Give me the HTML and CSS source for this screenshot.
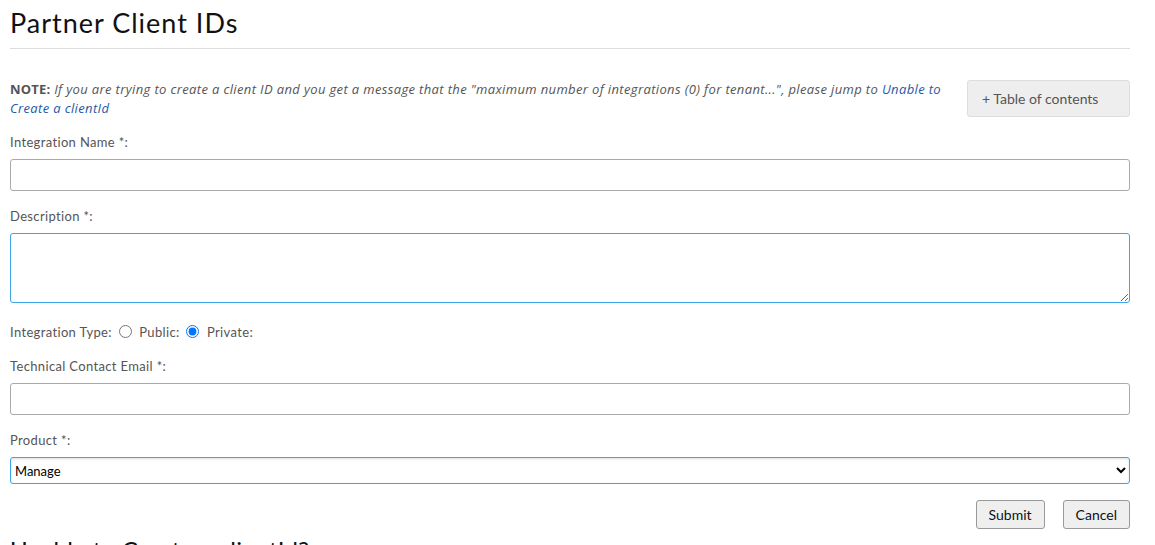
FILE: index.html
```html
<!DOCTYPE html>
<html>
<head>
<meta charset="utf-8">
<link rel="stylesheet" href="styles.css">
</head>
<body>
<div class="page">
  <h1 class="title">Partner Client IDs</h1>
  <div class="note-row">
    <p class="note"><b>NOTE:</b> <i>If you are trying to create a client ID and you get a message that the "maximum number of integrations (0) for tenant...", please jump to <a href="#" class="link">Unable to Create a clientId</a></i></p>
    <button class="toc">+ Table of contents</button>
  </div>
  <form class="form">
    <label class="label">Integration Name *:</label>
    <input class="input" type="text">
    <label class="label">Description *:</label>
    <textarea class="textarea"></textarea>
    <div class="type-row">Integration Type: <input type="radio" name="t" class="radio"> Public: <input type="radio" name="t" class="radio" checked> Private:</div>
    <label class="label">Technical Contact Email *:</label>
    <input class="input" type="text">
    <label class="label">Product *:</label>
    <select class="select"><option>Manage</option></select>
    <div class="actions">
      <button type="button" class="btn">Submit</button>
      <button type="button" class="btn">Cancel</button>
    </div>
  </form>
  <h2 class="sub">Unable to Create a clientId?</h2>
</div>
</body>
</html>
```
FILE: styles.css
```css
html, body { margin: 0; padding: 0; background: #fff; }
body { font-family: Lato, "Open Sans", sans-serif; color: #555; overflow: hidden; height: 545px; }
.page { width: 1120px; margin-left: 10px; }
.title { margin: 0; padding-top: 6px; font-weight: 400; font-size: 27px; letter-spacing: 1px; line-height: 34px; color: #111; padding-bottom: 8px; border-bottom: 1px solid #ddd; }
.note-row { display: flex; align-items: flex-start; margin-top: 31px; }
.note { margin: 0; flex: 1; font-family: "Open Sans", Lato, sans-serif; font-size: 13px; letter-spacing: 0.36px; line-height: 19px; color: #555; padding-right: 20px; }
.note b { font-weight: 700; letter-spacing: 0.2px; }
.link { color: #1f5aa6; text-decoration: none; }
.toc { width: 163px; height: 37px; margin-top: 0; flex: none; background: #eee; border: 1px solid #ddd; border-radius: 3px; font-family: Lato, sans-serif; font-size: 14px; color: #555; text-align: left; padding: 0 0 0 14px; }
.form { display: flex; flex-direction: column; margin-top: 15px; }
.label { font-size: 13px; letter-spacing: 0.35px; line-height: 18px; color: #555; margin-bottom: 8px; }
.input { box-sizing: border-box; height: 32px; border: 1px solid #aaa; border-radius: 3px; margin: 0 0 16px; }
.textarea { box-sizing: border-box; height: 70px; border: 1px solid #3aa6e6; border-radius: 3px; margin: 0 0 20px; resize: vertical; }
.type-row { font-size: 13px; letter-spacing: 0.35px; line-height: 18px; color: #555; margin-bottom: 16px; display: flex; align-items: center; white-space: pre; }
.radio { margin: 0 4px 2px 3px; width: 13px; height: 13px; }
.select { box-sizing: border-box; height: 27px; border: 1px solid #3aa6e6; border-radius: 3px; box-shadow: inset 0 1px 3px rgba(0,0,0,0.12); font-family: Lato, sans-serif; font-size: 13px; color: #000; margin: 0 0 16px; padding-left: 0; background: #fff; }
.actions { display: flex; justify-content: flex-end; gap: 18px; }
.btn { height: 29px; padding: 0 12px; font-family: Lato, sans-serif; font-size: 14px; color: #111; background: #efefef; border: 1px solid #999; border-radius: 3px; }
.sub { margin: 5px 0 0; font-weight: 400; font-size: 24px; letter-spacing: 0.3px; line-height: 32px; color: #111; }
```
